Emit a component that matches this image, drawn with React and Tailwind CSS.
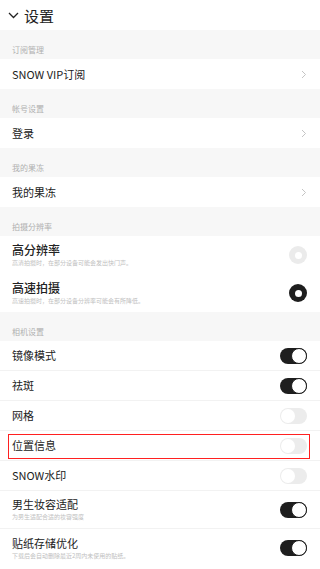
import React from 'react';

const font = { fontFamily: '"Noto Sans CJK SC", "Noto Sans", sans-serif' };

const Section = ({ title }) => (
  <div className="h-[29px] bg-[#f7f7f7] flex items-end pb-[5px] px-[12px]">
    <span className="text-[8px] text-[#b0b0b0] leading-none">{title}</span>
  </div>
);

const Chevron = () => (
  <svg width="6" height="9" viewBox="0 0 6 9" fill="none">
    <path d="M1 1l3.5 3.5L1 8" stroke="#c4c4c4" strokeWidth="1" />
  </svg>
);

const Toggle = ({ on }) =>
  on ? (
    <div className="w-[27px] h-[16px] rounded-full bg-[#1e1e1e] flex items-center justify-end">
      <div className="w-[16px] h-[16px] rounded-full bg-white border-[1.5px] border-[#1e1e1e]" />
    </div>
  ) : (
    <div className="w-[27px] h-[16px] rounded-full bg-[#ececec] flex items-center pl-[1px]">
      <div className="w-[14px] h-[14px] rounded-full bg-white" />
    </div>
  );

const Radio = ({ on }) => (
  <div
    className={`w-[18px] h-[18px] rounded-full flex items-center justify-center ${
      on ? 'bg-[#1e1e1e]' : 'bg-[#ebebeb]'
    }`}
  >
    <div className="w-[7px] h-[7px] rounded-full bg-white" />
  </div>
);

const Row = ({ label, sub, right, last, boxed, bold }) => (
  <div
    className={`relative bg-white px-[12px] flex items-center justify-between ${
      sub ? 'h-[38px]' : 'h-[30px]'
    } ${last ? '' : 'border-b border-[#f2f2f2]'}`}
  >
    <div className="flex flex-col">
      <span
        className={`text-[#222] leading-none ${sub ? 'mb-[4px]' : ''} ${
          bold ? 'text-[12px] font-medium' : 'text-[11px]'
        }`}
      >
        {label}
      </span>
      {sub && <span className="text-[6px] text-[#c0c0c0] leading-none">{sub}</span>}
    </div>
    <div className="pr-[1px] flex items-center">{right}</div>
    {boxed && (
      <div className="absolute left-[8px] right-[10px] top-[3px] bottom-[1px] border border-[#ff2020]" />
    )}
  </div>
);

export default function App() {
  return (
    <div className="w-[320px] h-[569px] overflow-hidden bg-white" style={font}>
      <div className="h-[30px] flex items-center px-[8px] gap-[5px]">
        <svg width="11" height="7" viewBox="0 0 11 7" fill="none">
          <path d="M1 1l4.5 4.5L10 1" stroke="#222" strokeWidth="1.3" />
        </svg>
        <span className="text-[15px] text-[#222] leading-none">设置</span>
      </div>
      <Section title="订阅管理" />
      <Row label="SNOW VIP订阅" right={<Chevron />} last />
      <Section title="帐号设置" />
      <Row label="登录" right={<Chevron />} last />
      <Section title="我的果冻" />
      <Row label="我的果冻" right={<Chevron />} last />
      <Section title="拍摄分辨率" />
      <Row label="高分辨率" sub="高清拍摄时，在部分设备可能会发出快门声。" right={<Radio />} last bold />
      <Row label="高速拍摄" sub="高速拍摄时，在部分设备分辨率可能会有所降低。" right={<Radio on />} last bold />
      <Section title="相机设置" />
      <Row label="镜像模式" right={<Toggle on />} />
      <Row label="祛斑" right={<Toggle on />} />
      <Row label="网格" right={<Toggle />} />
      <Row label="位置信息" right={<Toggle />} boxed />
      <Row label="SNOW水印" right={<Toggle />} />
      <Row label="男生妆容适配" sub="为男生适配合适的妆容强度" right={<Toggle on />} />
      <Row label="贴纸存储优化" sub="下载后会自动删除最近2周内未使用的贴纸。" right={<Toggle on />} last />
    </div>
  );
}
